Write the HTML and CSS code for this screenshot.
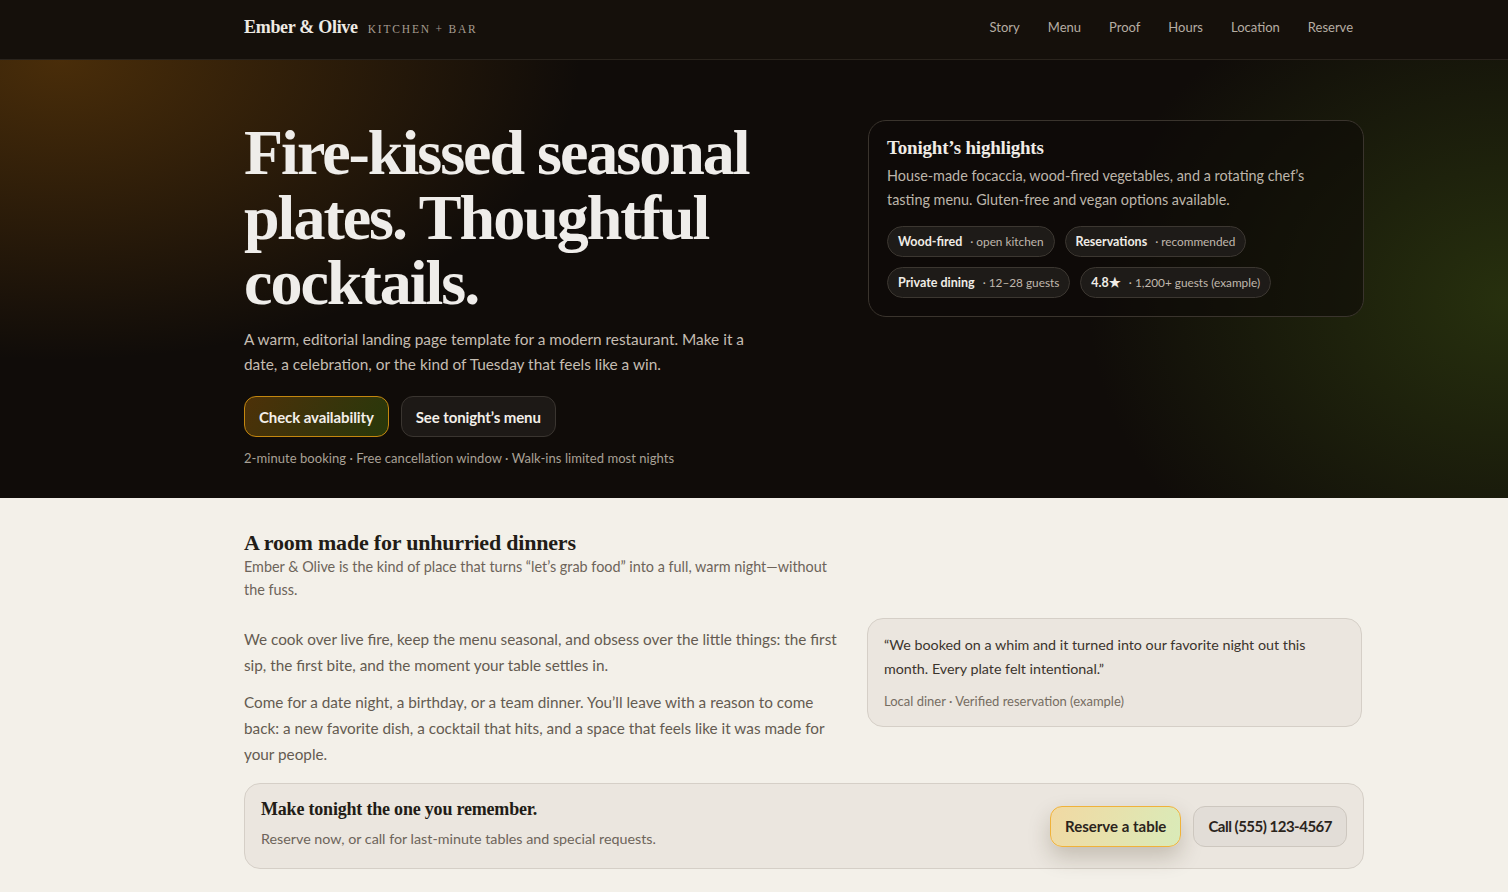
FILE: index.html
```html
<!DOCTYPE html>
<html lang="en">
<head>
<meta charset="utf-8">
<title>Ember &amp; Olive — Kitchen + Bar</title>
<link rel="stylesheet" href="styles.css">
</head>
<body>
<header class="topbar">
  <div class="wrap topbar-inner">
    <a class="brand" href="#">
      <span class="brand-name">Ember &amp; Olive</span>
      <span class="brand-tag">KITCHEN + BAR</span>
    </a>
    <nav class="nav">
      <a href="#">Story</a>
      <a href="#">Menu</a>
      <a href="#">Proof</a>
      <a href="#">Hours</a>
      <a href="#">Location</a>
      <a href="#">Reserve</a>
    </nav>
  </div>
</header>

<section class="hero">
  <div class="wrap hero-grid">
    <div class="hero-copy">
      <h1 class="hero-title">Fire-kissed seasonal plates. Thoughtful cocktails.</h1>
      <p class="hero-lead">A warm, editorial landing page template for a modern restaurant. Make it a date, a celebration, or the kind of Tuesday that feels like a win.</p>
      <div class="hero-actions">
        <a class="btn btn-primary-dark" href="#">Check availability</a>
        <a class="btn btn-ghost-dark" href="#">See tonight’s menu</a>
      </div>
      <p class="hero-note">2-minute booking · Free cancellation window · Walk-ins limited most nights</p>
    </div>
    <aside class="highlight-card">
      <h2 class="card-title">Tonight’s highlights</h2>
      <p class="card-text">House-made focaccia, wood-fired vegetables, and a rotating chef’s tasting menu. Gluten-free and vegan options available.</p>
      <div class="chips">
        <span class="chip"><b>Wood-fired</b><span class="chip-sub">· open kitchen</span></span>
        <span class="chip"><b>Reservations</b><span class="chip-sub">· recommended</span></span>
        <span class="chip"><b>Private dining</b><span class="chip-sub">· 12–28 guests</span></span>
        <span class="chip"><b>4.8★</b><span class="chip-sub">· 1,200+ guests (example)</span></span>
      </div>
    </aside>
  </div>
</section>

<main class="story">
  <div class="wrap">
    <h2 class="section-title">A room made for unhurried dinners</h2>
    <p class="section-sub">Ember &amp; Olive is the kind of place that turns “let’s grab food” into a full, warm night—without the fuss.</p>
    <div class="story-grid">
      <div class="story-copy">
        <p>We cook over live fire, keep the menu seasonal, and obsess over the little things: the first sip, the first bite, and the moment your table settles in.</p>
        <p>Come for a date night, a birthday, or a team dinner. You’ll leave with a reason to come back: a new favorite dish, a cocktail that hits, and a space that feels like it was made for your people.</p>
      </div>
      <figure class="quote-card">
        <blockquote>“We booked on a whim and it turned into our favorite night out this month. Every plate felt intentional.”</blockquote>
        <figcaption>Local diner · Verified reservation (example)</figcaption>
      </figure>
    </div>
    <div class="cta">
      <div class="cta-copy">
        <h3 class="cta-title">Make tonight the one you remember.</h3>
        <p class="cta-text">Reserve now, or call for last-minute tables and special requests.</p>
      </div>
      <div class="cta-actions">
        <a class="btn btn-primary-light" href="#">Reserve a table</a>
        <a class="btn btn-ghost-light" href="#">Call (555) 123-4567</a>
      </div>
    </div>
  </div>
</main>
</body>
</html>
```

FILE: styles.css
```css
* { box-sizing: border-box; }
html, body { margin: 0; padding: 0; }
body {
  font-family: "Lato", "Noto Sans", sans-serif;
  background: #f3f0e9;
  color: #2a241e;
}
a { text-decoration: none; color: inherit; }
p { margin: 0; }
h1, h2, h3 { margin: 0; }

.wrap { width: 1120px; margin-left: calc(50% - 510px); }

/* Top bar */
.topbar {
  background: #15100b;
  border-bottom: 1px solid #2a241d;
  height: 60px;
}
.topbar-inner {
  height: 54px;
  display: flex;
  align-items: center;
  justify-content: space-between;
}
.brand { display: flex; align-items: baseline; gap: 10px; }
.brand-name {
  font-family: "Liberation Serif", serif;
  font-weight: 700;
  font-size: 18px;
  color: #eeeae4;
  letter-spacing: -0.3px;
}
.brand-tag {
  font-family: "Liberation Serif", serif;
  font-size: 11.5px;
  letter-spacing: 1.8px;
  color: #a59c90;
}
.nav { display: flex; gap: 8px; margin-right: 1px; }
.nav a {
  font-size: 13px;
  color: #b5ada3;
  padding: 6px 10px;
}

/* Hero */
.hero {
  background:
    radial-gradient(ellipse 520px 300px at 4% 0%, rgba(120, 72, 10, 0.55), rgba(120,72,10,0) 100%),
    radial-gradient(ellipse 420px 340px at 100% 55%, rgba(58, 78, 18, 0.55), rgba(58,78,18,0) 100%),
    #100c09;
  padding: 60px 0 0;
  height: 438px;
}
.hero-grid {
  display: grid;
  grid-template-columns: 1fr 496px;
  gap: 48px;
  align-items: start;
}
.hero-title {
  font-family: "Liberation Serif", serif;
  font-weight: 700;
  font-size: 64px;
  line-height: 65px;
  letter-spacing: -2px;
  color: #efedea;
  max-width: 540px;
}
.hero-lead {
  margin-top: 12px;
  font-size: 15.4px;
  line-height: 25px;
  color: #c5bdb2;
  max-width: 520px;
}
.hero-actions { display: flex; gap: 12px; margin-top: 19px; }
.btn {
  display: inline-flex;
  align-items: center;
  justify-content: center;
  height: 41px;
  padding: 0 14px;
  border-radius: 12px;
  font-weight: 700;
  font-size: 15px;
}
.btn-primary-dark {
  color: #f3efe9;
  border: 1px solid #c4870f;
  background: linear-gradient(120deg, #4d3108 0%, #3a340b 50%, #28380a 100%);
  letter-spacing: -0.1px;
}
.btn-ghost-dark {
  color: #f3efe9;
  border: 1px solid #3a3530;
  background: #1d1916;
  letter-spacing: -0.1px;
}
.hero-note {
  margin-top: 13px;
  font-size: 13px;
  color: #a9a196;
  letter-spacing: 0.05px;
}

.highlight-card {
  border: 1px solid #3a342d;
  border-radius: 18px;
  background: rgba(12, 10, 8, 0.55);
  padding: 15px 18px 18px;
}
.card-title {
  font-family: "Liberation Serif", serif;
  font-weight: 700;
  font-size: 19px;
  line-height: 24px;
  color: #f0ece6;
  letter-spacing: -0.2px;
}
.card-text {
  margin-top: 4px;
  font-size: 14.4px;
  line-height: 24px;
  color: #bdb5aa;
}
.chips { display: flex; flex-wrap: wrap; gap: 10px; margin-top: 14px; }
.chip {
  display: inline-flex;
  align-items: center;
  height: 31px;
  padding: 0 10px;
  border: 1px solid #3c3731;
  border-radius: 999px;
  background: #1e1b18;
  font-size: 12.5px;
  color: #f0ece6;
}
.chip b { font-weight: 700; }
.chip-sub { margin-left: 8px; color: #c0b8ad; font-size: 11.8px; }

/* Story */
.story { padding: 32px 0 24px; }
.section-title {
  font-family: "Liberation Serif", serif;
  font-weight: 700;
  font-size: 22px;
  line-height: 25px;
  color: #221c16;
  letter-spacing: -0.2px;
}
.section-sub {
  margin-top: 0;
  max-width: 600px;
  font-size: 14.4px;
  line-height: 23px;
  color: #6d645a;
}
.story-grid {
  display: grid;
  grid-template-columns: 1fr 497px;
  gap: 22px;
  margin-top: 17px;
  align-items: start;
}
.story-copy { padding-top: 8px; }
.story-copy p {
  font-size: 15.3px;
  line-height: 26px;
  color: #645b51;
}
.story-copy p + p { margin-top: 11px; }
.quote-card {
  margin: 0 2px 0 0;
  border: 1px solid #d5cfc7;
  border-radius: 16px;
  background: #ebe6df;
  padding: 14px 16px 17px;
}
.quote-card blockquote {
  margin: 0;
  font-size: 14.3px;
  line-height: 24px;
  color: #3b342d;
}
.quote-card figcaption {
  margin-top: 12px;
  font-size: 13px;
  color: #766d62;
}

.cta {
  margin-top: 16px;
  border: 1px solid #d5cfc7;
  border-radius: 16px;
  background: #ebe6df;
  padding: 15px 16px 21px;
  display: flex;
  align-items: center;
  justify-content: space-between;
}
.cta-title {
  font-family: "Liberation Serif", serif;
  font-weight: 700;
  font-size: 18px;
  color: #221c16;
  letter-spacing: -0.2px;
}
.cta-text { margin-top: 10px; font-size: 14.3px; color: #6d645a; }
.cta-actions { display: flex; gap: 12px; margin-top: 6px; }
.btn-primary-light {
  color: #2b241c;
  border: 1px solid #f0b23a;
  background: linear-gradient(110deg, #f1d9a3 0%, #e6e2ad 50%, #d9ebb9 100%);
  box-shadow: 0 10px 22px rgba(60, 45, 20, 0.22);
}
.btn-ghost-light {
  color: #2b241c;
  border: 1px solid #cdc7bf;
  background: #e2ddd7;
  letter-spacing: -0.5px;
}
```
